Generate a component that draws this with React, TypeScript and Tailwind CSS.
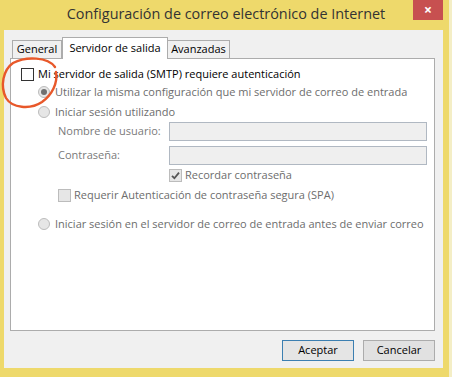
import React from "react";

const disabledText = "text-[#6d6d6d]";

function Radio({ checked }: { checked?: boolean }) {
  return (
    <span className="flex h-[12px] w-[12px] shrink-0 items-center justify-center rounded-full border border-[#bcbcbc] bg-[#e6e6e6]">
      {checked && <span className="h-[6px] w-[6px] rounded-full bg-[#707070]" />}
    </span>
  );
}

function Check({ checked, enabled }: { checked?: boolean; enabled?: boolean }) {
  return (
    <span
      className={
        enabled
          ? "flex h-[13px] w-[13px] shrink-0 items-center justify-center border border-[#333333] bg-white"
          : "flex h-[13px] w-[13px] shrink-0 items-center justify-center border border-[#bcbcbc] bg-[#e6e6e6]"
      }
    >
      {checked && (
        <svg width="9" height="9" viewBox="0 0 9 9">
          <path d="M1 4.8 L3.4 7.2 L8 1.6" fill="none" stroke="#555555" strokeWidth="1.8" />
        </svg>
      )}
    </span>
  );
}

export default function App() {
  return (
    <div
      className="relative flex h-[377px] w-[452px] flex-col overflow-hidden whitespace-nowrap bg-[#eed96b] text-[11px] text-black"
      style={{ fontFamily: "'Open Sans', 'Noto Sans', sans-serif" }}
    >
      {/* title bar */}
      <div className="flex h-[30px] shrink-0 items-center justify-center pb-[2px] text-[14.4px] text-[#333333]">
        Configuración de correo electrónico de Internet
      </div>
      <div className="absolute right-[9px] top-0 flex h-[20px] w-[30px] items-center justify-center bg-[#c75050] text-[14px] font-bold leading-none text-white">
        ×
      </div>
      {/* edge of the window behind */}
      <div className="absolute right-0 top-0 h-full w-[3px] bg-[#f4eec6]" />

      {/* client area */}
      <div className="ml-[4px] mr-[9px] flex h-[338px] shrink-0 flex-col bg-[#f0f0f0] pl-[6px] pr-[8px] pt-[7px]">
        {/* tabs */}
        <div className="flex h-[21px] items-end pl-[2px]">
          <div className="flex h-[18px] w-[50px] items-center justify-center border border-b-0 border-[#acacac] bg-[#f0f0f0]">
            General
          </div>
          <div className="relative z-10 -mb-px flex h-[22px] w-[106px] items-start justify-center border border-b-0 border-[#acacac] bg-white pt-[2px]">
            Servidor de salida
          </div>
          <div className="flex h-[18px] w-[62px] items-center justify-center border border-b-0 border-l-0 border-[#acacac] bg-[#f0f0f0]">
            Avanzadas
          </div>
        </div>

        {/* tab page */}
        <div className="flex h-[273px] flex-col border border-[#acacac] bg-white pl-[10px] pr-[7px] pt-[6px]">
          <div className="flex h-[18px] items-center gap-[4px]">
            <Check enabled />
            <span>Mi servidor de salida (SMTP) requiere autenticación</span>
          </div>

          <div className={`ml-[17px] flex h-[18px] items-center gap-[5px] ${disabledText}`}>
            <Radio checked />
            <span>Utilizar la misma configuración que mi servidor de correo de entrada</span>
          </div>

          <div className={`ml-[17px] mt-[2px] flex h-[18px] items-center gap-[5px] ${disabledText}`}>
            <Radio />
            <span>Iniciar sesión utilizando</span>
          </div>

          <div className="ml-[37px] mt-[1px] flex h-[19px] items-center">
            <span className="w-[111px] text-[#7a7a7a]">Nombre de usuario:</span>
            <div className="h-[19px] flex-1 border border-[#b0b8c2] bg-[#efefef]" />
          </div>

          <div className="ml-[37px] mt-[5px] flex h-[19px] items-center">
            <span className="w-[111px] text-[#7a7a7a]">Contraseña:</span>
            <div className="h-[19px] flex-1 border border-[#b0b8c2] bg-[#efefef]" />
          </div>

          <div className={`ml-[148px] mt-[1px] flex h-[18px] items-center gap-[3px] ${disabledText}`}>
            <Check checked />
            <span>Recordar contraseña</span>
          </div>

          <div className={`ml-[37px] mt-[2px] flex h-[18px] items-center gap-[3px] ${disabledText}`}>
            <Check />
            <span>Requerir Autenticación de contraseña segura (SPA)</span>
          </div>

          <div className={`ml-[17px] mt-[11px] flex h-[18px] items-center gap-[5px] ${disabledText}`}>
            <Radio />
            <span>Iniciar sesión en el servidor de correo de entrada antes de enviar correo</span>
          </div>
        </div>

        {/* buttons */}
        <div className="mt-[9px] flex justify-end gap-[9px]">
          <button className="flex h-[21px] w-[72px] items-center justify-center border border-[#3c7fb1] bg-[#e5e5e5]">
            Aceptar
          </button>
          <button className="flex h-[21px] w-[72px] items-center justify-center border border-[#acacac] bg-[#e1e1e1]">
            Cancelar
          </button>
        </div>
      </div>

      {/* hand-drawn annotation */}
      <svg className="pointer-events-none absolute left-0 top-0" width="80" height="120" viewBox="0 0 80 120">
        <path
          d="M55 67 C48 57 26 56 13 63 C3 70 0 86 6 98 C12 108 30 110 42 102 C52 95 58 83 56 72"
          fill="none"
          stroke="#e8582a"
          strokeWidth="2.4"
          strokeLinecap="round"
        />
      </svg>
    </div>
  );
}
